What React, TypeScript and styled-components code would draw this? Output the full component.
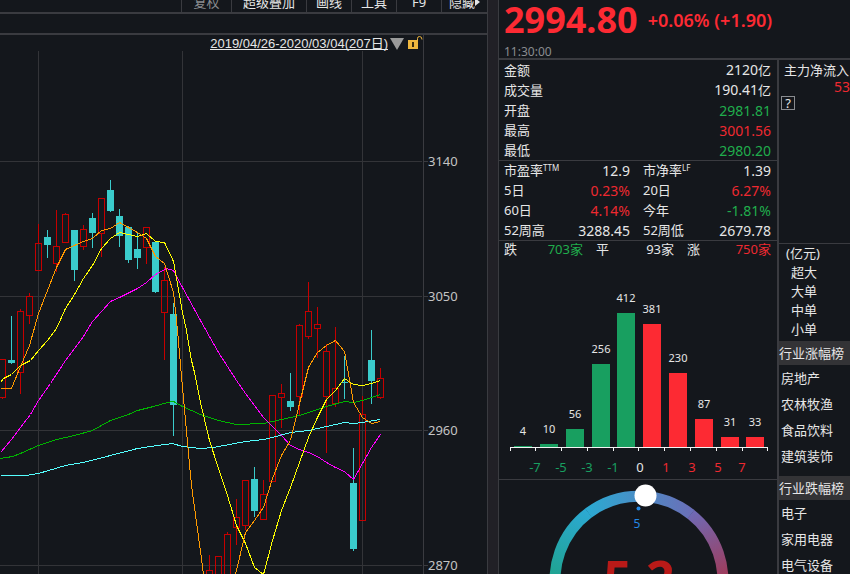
import React from "react";
import styled, { createGlobalStyle } from "styled-components";

const color = {
  bg: "#14171c",
  line: "#3a3b40",
  grid: "#333438",
  gutter: "#212026",
  text: "#e6e6e6",
  muted: "#8a8c90",
  red: "#ee2930",
  green: "#20ad4c",
  barRed: "#fd2a33",
  barGreen: "#189f60",
  candleRed: "#c60000",
  candleCyan: "#3acccc",
};

type Tone = "up" | "down" | "flat";
const toneColor = { up: color.red, down: color.green, flat: color.text };

const GlobalStyle = createGlobalStyle`
  * { box-sizing: border-box; }
  body {
    margin: 0;
    background: ${color.bg};
    color: ${color.text};
    font: 13px/20px "Noto Sans", "Noto Sans CJK SC", sans-serif;
  }
  button {
    margin: 0;
    padding: 0;
    border: 0;
    background: none;
    color: inherit;
    font: inherit;
    cursor: pointer;
  }
  a { color: inherit; text-decoration: none; }
`;

const Page = styled.div`
  display: flex;
  height: 100vh;
  overflow: hidden;
`;

const ChartPanel = styled.main`
  flex: 1;
  min-width: 0;
  border-right: 1px solid ${color.line};
`;

const Toolbar = styled.nav`
  display: flex;
  justify-content: flex-end;
  align-items: flex-end;
  height: 14px;
  border-bottom: 2px solid ${color.line};
`;

const ToolButton = styled.button<{ $wide?: boolean; $dim?: boolean }>`
  display: flex;
  justify-content: center;
  align-items: center;
  flex: 0 0 ${(p) => (p.$wide ? 75 : 45)}px;
  height: 20px;
  border-left: 1px solid ${color.line};
  color: ${(p) => (p.$dim ? color.muted : color.text)};
  &:first-child { flex-basis: 50px; }
  &:last-child { flex-basis: 46px; }
`;

const SubBar = styled.div`
  height: 21px;
  border-bottom: 2px solid ${color.line};
`;

const RangeRow = styled.div`
  display: flex;
  height: 16px;
  padding-right: 63px;
`;

const RangeTools = styled.div`
  display: flex;
  flex: 1;
  justify-content: flex-end;
  align-items: flex-start;
  gap: 2px;
  border-right: 1px solid ${color.line};
`;

const RangeLink = styled.a`
  height: 15px;
  border-bottom: 1px solid ${color.text};
  font-family: "Liberation Sans", "Noto Sans CJK SC", sans-serif;
  line-height: 17px;
  white-space: nowrap;
`;

const IconButton = styled.button`
  display: flex;
  height: 16px;
`;

const Drawing = styled.svg`
  display: block;
  width: 100%;
  height: auto;
  font-family: "Noto Sans", "Noto Sans CJK SC", sans-serif;
`;

const Gutter = styled.div`
  flex: 0 0 10px;
  background: ${color.gutter};
`;

const QuotePanel = styled.section`
  flex: 0 0 352px;
  display: flex;
  flex-direction: column;
  border-left: 1px solid ${color.line};
`;

const QuoteHeader = styled.header`
  padding-left: 5px;
  border-bottom: 2px solid ${color.line};
`;

const PriceLine = styled.div`
  display: flex;
  align-items: center;
  gap: 10px;
  height: 46px;
  padding-bottom: 6px;
  color: ${color.barRed};
  font-weight: 600;
  white-space: nowrap;
`;

const Price = styled.strong`
  font-size: 36px;
  font-weight: 700;
  line-height: 40px;
`;

const Change = styled.span`
  font-size: 18px;
`;

const Time = styled.time`
  display: block;
  color: ${color.muted};
  font-size: 12px;
  line-height: 12px;
`;

const QuoteBody = styled.div`
  flex: 1;
  display: flex;
  min-height: 0;
`;

const Stats = styled.div`
  flex: 1;
  min-width: 0;
  border-right: 2px solid ${color.line};
`;

const StatTable = styled.table`
  width: 100%;
  border-collapse: collapse;
  table-layout: fixed;
`;

const Divided = styled.div`
  box-shadow: inset 0 1px ${color.line};
`;

const Label = styled.th`
  height: 20px;
  padding: 0 0 0 5px;
  font-weight: 400;
  line-height: 19px;
  text-align: left;
  white-space: nowrap;
`;

const Value = styled.td<{ $tone: Tone; $inner?: boolean }>`
  height: 20px;
  padding: 0 ${(p) => (p.$inner ? 8 : 6)}px 0 0;
  color: ${(p) => toneColor[p.$tone]};
  font-size: 14px;
  line-height: 19px;
  text-align: right;
  white-space: nowrap;
`;

const Unit = styled.span`
  font-size: 13px;
`;

const Mark = styled.sup`
  font-size: 8px;
  line-height: 8px;
  vertical-align: 4px;
`;

const Breadth = styled.dl`
  display: grid;
  grid-template-columns: 79fr 78fr 84fr;
  gap: 13px;
  height: 20px;
  margin: 0;
  padding: 0 6px 0 5px;
  line-height: 19px;
  box-shadow: inset 0 1px ${color.line};
`;

const BreadthItem = styled.div<{ $tone: Tone }>`
  display: flex;
  justify-content: space-between;
  dd { margin: 0; color: ${(p) => toneColor[p.$tone]}; }
`;

const Side = styled.aside`
  flex: 0 0 71px;
  min-width: 0;
  overflow: hidden;
  white-space: nowrap;
`;

const Flow = styled.section`
  height: 184px;
  padding-left: 5px;
  border-bottom: 1px solid ${color.line};
`;

const FlowValue = styled.div`
  color: ${color.red};
  font-size: 14px;
  text-align: right;
  line-height: 14px;
`;

const HelpButton = styled.button`
  display: block;
  width: 14px;
  height: 14px;
  margin: 2px 0 0 -3px;
  border: 1px solid ${color.muted};
  line-height: 12px;
`;

const OrderSizes = styled.ul`
  height: 97px;
  margin: 0;
  padding: 0 0 0 12px;
  list-style: none;
  line-height: 19px;
`;

const SizesCaption = styled.li`
  margin-left: -5px;
`;

const BoardTitle = styled.h2`
  height: 24px;
  margin: 0;
  background: #333336;
  font-size: 13px;
  font-weight: 400;
  line-height: 25px;
`;

const BoardList = styled.ul`
  margin: 0;
  padding: 0 0 7px 2px;
  min-height: 111px;
  list-style: none;
  line-height: 26px;
`;

const tools = [
  { label: "复权", dim: true },
  { label: "超级叠加", wide: true },
  { label: "画线" },
  { label: "工具" },
  { label: "F9" },
  { label: "隐藏", arrow: true },
];

/* x centre, high, body top, body bottom, low */
type Candle = [number, number, number, number, number];

const rising: Candle[] = [
  [2, 359, 359, 398, 399], [20, 309, 311, 373, 394], [29, 293, 296, 316, 324],
  [38, 224, 243, 271, 271], [56, 210, 246, 264, 272], [65, 213, 214, 243, 243],
  [83, 225, 229, 247, 250], [101, 198, 198, 234, 257], [146, 227, 227, 248, 264],
  [164, 267, 280, 313, 360], [209, 555, 570, 590, 590], [218, 556, 556, 590, 590],
  [227, 532, 534, 590, 590], [236, 499, 517, 528, 545], [245, 480, 480, 526, 530],
  [263, 480, 494, 520, 520], [272, 395, 395, 482, 482], [281, 384, 393, 398, 428],
  [299, 324, 325, 397, 415], [308, 282, 311, 337, 339], [317, 307, 324, 329, 358],
  [326, 344, 351, 397, 453], [335, 327, 388, 404, 407], [362, 396, 414, 521, 521],
  [380, 368, 378, 398, 399],
];

const falling: Candle[] = [
  [11, 316, 360, 363, 364], [47, 230, 237, 245, 258], [74, 230, 230, 270, 281],
  [92, 213, 218, 233, 248], [110, 180, 190, 211, 212], [119, 209, 216, 236, 247],
  [128, 226, 227, 260, 263], [137, 233, 249, 258, 269], [155, 242, 242, 292, 293],
  [173, 303, 314, 405, 436], [254, 467, 479, 511, 517], [290, 373, 401, 407, 411],
  [344, 356, 382, 383, 399], [353, 448, 483, 549, 551], [371, 330, 360, 381, 404],
];

const averages = [
  {
    stroke: "#55ffff",
    points: "0,475 25,475 38,473 65,465 83,462 110,455 137,448 150,446 172,443 182,446 200,448 213,447 245,441 263,439 272,437 290,432 308,430 326,426 344,422 353,423 362,422 380,419",
  },
  {
    stroke: "#00b400",
    points: "0,458 12,456 20,453 38,445 56,439 74,435 92,430 110,420 128,414 137,410 153,406 167,402 173,401 182,406 200,414 218,420 236,424 263,423 272,421 299,415 326,406 344,401 353,402 362,400 371,397 380,394",
  },
  {
    stroke: "#ff00ff",
    points: "0,452 11,439 20,427 30,414 38,400 50,383 65,360 83,336 92,321 101,311 110,301 119,297 137,288 146,282 155,274 166,268 173,270 182,287 200,320 209,336 218,352 227,366 236,380 245,393 254,405 263,417 272,426 281,435 290,445 299,449 308,452 317,456 326,462 335,467 344,471 353,479 362,463 371,447 380,434",
  },
  {
    stroke: "#ffff00",
    points: "0,382 3,378 11,374 20,365 30,360 38,350 47,340 56,328 65,308 74,294 83,278 92,265 101,248 110,238 119,232 128,234 137,236 146,233 155,241 164,242 173,261 182,312 186,330 191,360 194,372 200,402 209,440 218,468 227,495 236,525 245,543 254,567 263,574 272,540 281,510 290,487 299,462 308,437 317,417 326,399 335,390 344,378 353,384 362,385 371,383 380,380",
  },
  {
    stroke: "#ff9a00",
    points: "0,388 11,388 20,366 29,345 38,313 47,290 56,267 65,249 74,245 83,241 92,238 101,230 110,228 119,222 128,227 137,232 146,238 155,256 164,263 173,292 177,330 182,387 188,453 191,485 200,551 203,574 208,600 230,600 235,574 245,532 254,520 263,507 272,478 281,455 290,440 299,403 308,367 317,352 326,345 335,340 344,351 353,402 362,417 371,423 380,421",
  },
];

const priceTicks = [
  { y: 161, price: 3140 },
  { y: 296, price: 3050 },
  { y: 430, price: 2960 },
  { y: 565, price: 2870 },
];

function CandleChart() {
  return (
    <Drawing viewBox="0 51 487 523" role="img" aria-label="K线图">
      <g shapeRendering="crispEdges">
        <g fill={color.grid}>
          {[38, 182, 362].map((x) => (
            <rect key={x} x={x} y={51} width={1} height={523} />
          ))}
          {priceTicks.map((t) => (
            <rect key={t.y} x={0} y={t.y} width={422} height={1} />
          ))}
        </g>
        <g fill={color.line}>
          <rect x={423} y={51} width={1} height={523} />
          {priceTicks.map((t) => (
            <rect key={t.y} x={423} y={t.y} width={5} height={1} />
          ))}
        </g>
        {rising.map(([x, high, top, bottom, low]) => (
          <g key={x}>
            <rect x={x} y={high} width={1} height={top - high} fill={color.candleRed} />
            <rect x={x} y={bottom} width={1} height={low - bottom} fill={color.candleRed} />
            <path
              d={`M${x - 3} ${top}h7v${bottom - top}h-7zm1 1v${bottom - top - 2}h5v-${bottom - top - 2}z`}
              fill={color.candleRed}
              fillRule="evenodd"
            />
          </g>
        ))}
        {falling.map(([x, high, top, bottom, low]) => (
          <g key={x} fill={color.candleCyan}>
            <rect x={x} y={high} width={1} height={low - high} />
            <rect x={x - 3} y={top} width={7} height={bottom - top} />
          </g>
        ))}
        {averages.map((a) => (
          <polyline key={a.stroke} points={a.points} fill="none" stroke={a.stroke} transform="translate(0.5 0.5)" />
        ))}
      </g>
      <g fill="#c4c4c4" fontSize={13}>
        {priceTicks.map((t) => (
          <text key={t.y} x={428} y={t.y + 5}>{t.price}</text>
        ))}
      </g>
    </Drawing>
  );
}

/* bar left, bar top, count */
const bars: [number, number, number][] = [
  [514, 446, 4], [540, 444, 10], [566, 429, 56], [592, 364, 256], [617, 313, 412],
  [643, 324, 381], [669, 373, 230], [695, 419, 87], [721, 437, 31], [746, 437, 33],
];
const barTicks = [510, 535, 561, 587, 613, 638, 664, 690, 716, 742, 767];
const barScale: [number, number][] = [
  [535, -7], [561, -5], [587, -3], [613, -1], [640, 0], [666, 1], [692, 3], [718, 5], [742, 7],
];

function DistributionChart() {
  return (
    <Drawing viewBox="499 260 278 219" role="img" aria-label="涨跌分布">
      <g shapeRendering="crispEdges">
        {bars.map(([x, y], i) => (
          <rect key={x} x={x} y={y} width={18} height={447 - y} fill={i < 5 ? color.barGreen : color.barRed} />
        ))}
        <rect x={510} y={447} width={258} height={1} fill="#f4f4f4" />
        {barTicks.map((x) => (
          <rect key={x} x={x} y={447} width={1} height={4} fill="#f4f4f4" />
        ))}
      </g>
      <g fill={color.text} fontSize={11} textAnchor="middle">
        {bars.map(([x, y, n]) => (
          <text key={x} x={x + 9} y={y - 11}>{n}</text>
        ))}
      </g>
      <g fontSize={13} textAnchor="middle">
        {barScale.map(([x, n]) => (
          <text key={n} x={x} y={472} fill={n < 0 ? color.barGreen : n > 0 ? color.red : color.text}>{n}</text>
        ))}
      </g>
    </Drawing>
  );
}

function Gauge() {
  return (
    <Drawing viewBox="499 479 278 120" role="img" aria-label="市场温度 5.2">
      <defs>
        <linearGradient id="cool" gradientUnits="userSpaceOnUse" x1="552" y1="580" x2="589" y2="513">
          <stop offset="0" stopColor="#1fa38e" />
          <stop offset="1" stopColor="#2ca9d2" />
        </linearGradient>
        <linearGradient id="mid" gradientUnits="userSpaceOnUse" x1="589" y1="513" x2="691" y2="514">
          <stop offset="0" stopColor="#2ca9d2" />
          <stop offset="1" stopColor="#6a6fb8" />
        </linearGradient>
        <linearGradient id="warm" gradientUnits="userSpaceOnUse" x1="691" y1="514" x2="723" y2="580">
          <stop offset="0" stopColor="#7069b4" />
          <stop offset="1" stopColor="#a03a58" />
        </linearGradient>
      </defs>
      <g fill="none" strokeWidth={11}>
        <path d="M557.5 600A84 84 0 0 1 588.6 512.8" stroke="url(#cool)" />
        <path d="M588.4 513A84 84 0 0 1 691 514.4" stroke="url(#mid)" />
        <path d="M690.8 514.2A84 84 0 0 1 720.5 600" stroke="url(#warm)" />
      </g>
      <circle cx={645.5} cy={495.5} r={11} fill="#ffffff" />
      <circle cx={638.5} cy={508.5} r={2} fill="#2389e6" />
      <text x={637} y={528} fill="#2389e6" fontSize={12} textAnchor="middle">5</text>
      <text x={639} y={597} fill="#b91a18" fontSize={50} fontWeight={700} textAnchor="middle">5.2</text>
    </Drawing>
  );
}

const dayStats: { label: string; value: string; unit?: string; tone: Tone }[] = [
  { label: "金额", value: "2120", unit: "亿", tone: "flat" },
  { label: "成交量", value: "190.41", unit: "亿", tone: "flat" },
  { label: "开盘", value: "2981.81", tone: "down" },
  { label: "最高", value: "3001.56", tone: "up" },
  { label: "最低", value: "2980.20", tone: "down" },
];

type Ratio = { label: string; mark?: string; value: string; tone: Tone };
const ratioRows: [Ratio, Ratio][] = [
  [{ label: "市盈率", mark: "TTM", value: "12.9", tone: "flat" }, { label: "市净率", mark: "LF", value: "1.39", tone: "flat" }],
  [{ label: "5日", value: "0.23%", tone: "up" }, { label: "20日", value: "6.27%", tone: "up" }],
  [{ label: "60日", value: "4.14%", tone: "up" }, { label: "今年", value: "-1.81%", tone: "down" }],
  [{ label: "52周高", value: "3288.45", tone: "flat" }, { label: "52周低", value: "2679.78", tone: "flat" }],
];

const breadth: { label: string; value: string; tone: Tone }[] = [
  { label: "跌", value: "703家", tone: "down" },
  { label: "平", value: "93家", tone: "flat" },
  { label: "涨", value: "750家", tone: "up" },
];

const boards = [
  { title: "行业涨幅榜", items: ["房地产", "农林牧渔", "食品饮料", "建筑装饰"] },
  { title: "行业跌幅榜", items: ["电子", "家用电器", "电气设备"] },
];

export default function App() {
  return (
    <>
      <GlobalStyle />
      <Page>
        <ChartPanel>
          <Toolbar>
            {tools.map((t) => (
              <ToolButton key={t.label} $wide={t.wide} $dim={t.dim}>
                {t.label}
                {t.arrow && (
                  <svg width="5" height="8" viewBox="0 0 5 8" aria-hidden="true">
                    <path d="M0 0L5 4L0 8Z" fill={color.text} />
                  </svg>
                )}
              </ToolButton>
            ))}
          </Toolbar>
          <SubBar />
          <RangeRow>
            <RangeTools>
              <RangeLink href="#range">2019/04/26-2020/03/04(207日)</RangeLink>
              <IconButton aria-label="选择区间">
                <svg width="14" height="16" viewBox="0 0 14 16">
                  <path d="M0 3H14L7 15Z" fill="#9a9a9a" />
                </svg>
              </IconButton>
              <IconButton aria-label="锁定">
                <svg width="17" height="16" viewBox="0 0 17 16">
                  <path d="M2 5H12V14H2Z" fill="#efb73e" />
                  <path d="M6 7H8V12H6Z" fill="#3a2c10" />
                  <path d="M11.5 5V3.5Q11.5 1.5 13.5 1.5Q16 1.5 16 4.5" fill="none" stroke="#efb73e" />
                </svg>
              </IconButton>
            </RangeTools>
          </RangeRow>
          <CandleChart />
        </ChartPanel>
        <Gutter />
        <QuotePanel>
          <QuoteHeader>
            <PriceLine>
              <Price>2994.80</Price>
              <Change>+0.06% (+1.90)</Change>
            </PriceLine>
            <Time>11:30:00</Time>
          </QuoteHeader>
          <QuoteBody>
            <Stats>
              <StatTable>
                <tbody>
                  {dayStats.map((s) => (
                    <tr key={s.label}>
                      <Label scope="row">{s.label}</Label>
                      <Value $tone={s.tone}>{s.value}{s.unit && <Unit>{s.unit}</Unit>}</Value>
                    </tr>
                  ))}
                </tbody>
              </StatTable>
              <Divided>
                <StatTable>
                  <tbody>
                    {ratioRows.map((row) => (
                      <tr key={row[0].label}>
                        {row.map((r, i) => (
                          <React.Fragment key={r.label}>
                            <Label scope="row">{r.label}{r.mark && <Mark>{r.mark}</Mark>}</Label>
                            <Value $tone={r.tone} $inner={i === 0}>{r.value}</Value>
                          </React.Fragment>
                        ))}
                      </tr>
                    ))}
                  </tbody>
                </StatTable>
              </Divided>
              <Breadth>
                {breadth.map((b) => (
                  <BreadthItem key={b.label} $tone={b.tone}>
                    <dt>{b.label}</dt>
                    <dd>{b.value}</dd>
                  </BreadthItem>
                ))}
              </Breadth>
              <DistributionChart />
              <Divided>
                <Gauge />
              </Divided>
            </Stats>
            <Side>
              <Flow>
                主力净流入
                <FlowValue>53</FlowValue>
                <HelpButton aria-label="说明">?</HelpButton>
              </Flow>
              <OrderSizes>
                <SizesCaption>(亿元)</SizesCaption>
                <li>超大</li>
                <li>大单</li>
                <li>中单</li>
                <li>小单</li>
              </OrderSizes>
              {boards.map((b) => (
                <section key={b.title}>
                  <BoardTitle>{b.title}</BoardTitle>
                  <BoardList>
                    {b.items.map((item) => (
                      <li key={item}><a href="#board">{item}</a></li>
                    ))}
                  </BoardList>
                </section>
              ))}
            </Side>
          </QuoteBody>
        </QuotePanel>
      </Page>
    </>
  );
}
